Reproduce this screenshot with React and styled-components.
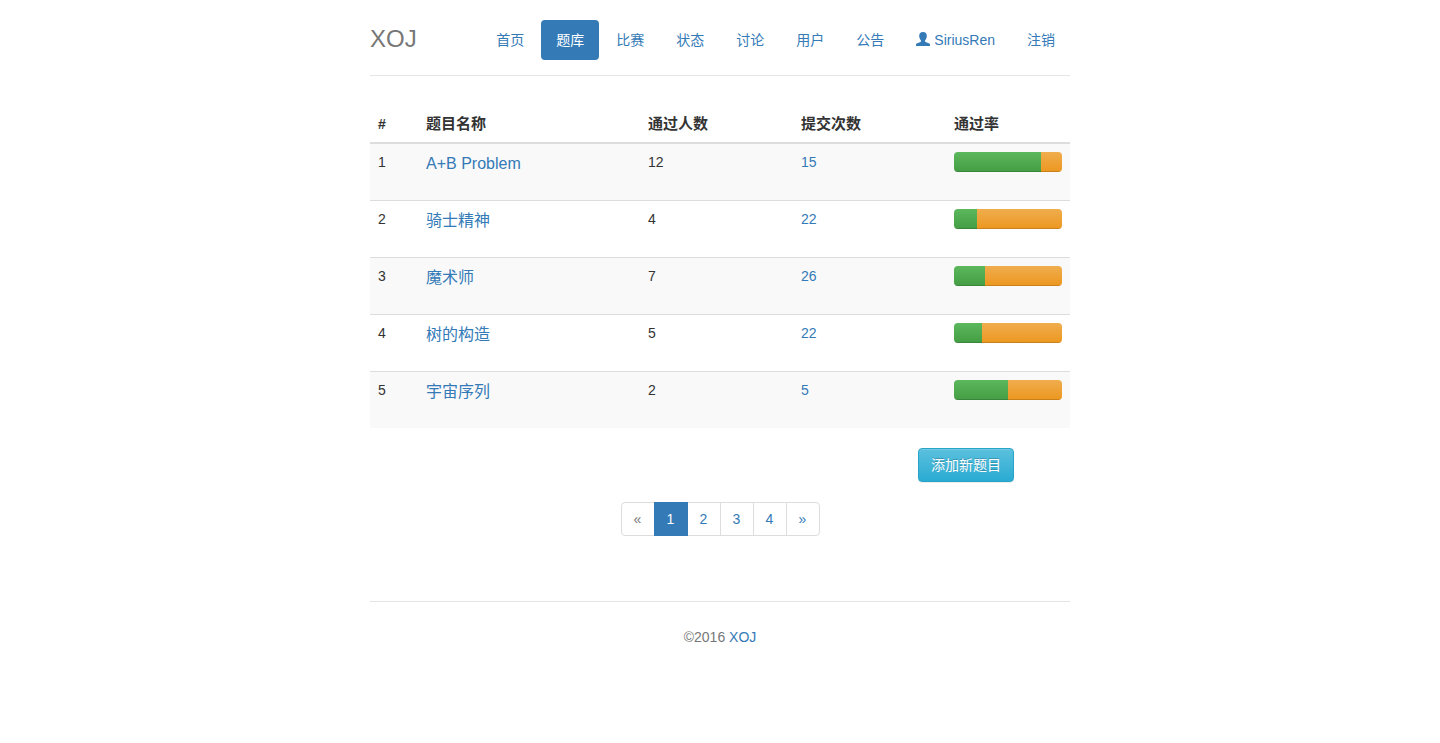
import React from 'react';
import styled, { createGlobalStyle } from 'styled-components';

const GlobalStyle = createGlobalStyle`
*{
  box-sizing:border-box;
}

body{
  margin:0;
  padding:20px 0;
  background-color:#fff;
  color:#333;
  font-family:"Liberation Sans", "Noto Sans CJK SC", sans-serif;
  font-size:14px;
  line-height:20px;
}

a{
  color:#337ab7;
  text-decoration:none;
}`

const Container = styled.div`
max-width:700px;
margin:0 auto;`

const Header = styled.header`
display:flex;
justify-content:space-between;
padding-bottom:15px;
margin-bottom:30px;
border-bottom:1px solid #e5e5e5;`

const Brand = styled.h3`
margin:0;
color:#777;
font-size:24px;
font-weight:normal;
line-height:38px;`

const Nav = styled.nav`
display:flex;
gap:2px;`

const NavLink = styled.a`
display:flex;
align-items:center;
gap:4px;
padding:10px 15px;
border-radius:4px;
color:${(props) => (props.$active ? '#fff' : '#337ab7')};
background-color:${(props) => (props.$active ? '#337ab7' : 'transparent')};`

const UserSvg = styled.svg`
width:14px;
height:14px;
margin-bottom:2px;
fill:currentColor;`

const Table = styled.table`
width:100%;
table-layout:fixed;
border-collapse:collapse;`

const Th = styled.th`
width:${(props) => props.$width};
padding:8px;
border-bottom:2px solid #ddd;
font-size:${(props) => (props.$small ? '14px' : '15px')};
text-align:left;`

const Row = styled.tr`
&:nth-child(odd){
  background-color:#f9f9f9;
}`

const Td = styled.td`
height:57px;
padding:8px;
border-top:1px solid #ddd;
vertical-align:top;`

const ProblemLink = styled.a`
font-size:16px;
line-height:24px;`

const Progress = styled.div`
display:flex;
height:20px;
overflow:hidden;
border-radius:4px;
background-color:#f5f5f5;`

const Bar = styled.div`
flex:${(props) => (props.$rest ? '1' : 'none')};
background-image:${(props) => (props.$rest
    ? 'linear-gradient(to bottom, #f0ad4e, #ec971f)'
    : 'linear-gradient(to bottom, #5cb85c, #449d44)')};
box-shadow:inset 0 -1px 0 rgba(0,0,0,0.15);`

const Actions = styled.div`
display:flex;
justify-content:flex-end;
padding:20px 8%;`

const AddBtn = styled.button`
padding:6px 12px;
border:1px solid #28a4c9;
border-radius:4px;
background-image:linear-gradient(to bottom, #5bc0de, #2aabd2);
box-shadow:inset 0 1px 0 rgba(255,255,255,0.15), 0 1px 1px rgba(0,0,0,0.075);
color:#fff;
font-family:inherit;
font-size:14px;
line-height:20px;
text-shadow:0 -1px 0 rgba(0,0,0,0.2);
cursor:pointer;`

const Pagination = styled.ul`
display:flex;
justify-content:center;
margin:0;
padding:0;
list-style:none;`

const PageItem = styled.li`
&:not(:first-child){
  margin-left:-1px;
}

&:first-child a{
  border-radius:4px 0 0 4px;
}

&:last-child a{
  border-radius:0 4px 4px 0;
}`

const PageLink = styled.a`
display:block;
position:relative;
z-index:${(props) => (props.$active ? 1 : 0)};
min-width:34px;
padding:6px 12px;
border:1px solid ${(props) => (props.$active ? '#337ab7' : '#ddd')};
background-color:${(props) => (props.$active ? '#337ab7' : '#fff')};
color:${(props) => (props.$active ? '#fff' : props.$disabled ? '#777' : '#337ab7')};
text-align:center;`

const Footer = styled.footer`
margin-top:65px;
padding-top:25px;
border-top:1px solid #e5e5e5;
color:#777;
text-align:center;`

const UserIcon = () => (
  <UserSvg viewBox="0 0 14 14" aria-hidden="true">
    <path d="M7 0C4.500 0 3.200 1.500 3.200 3.800c0 1.500.5 2.900 1.200 3.900.5.600.7.900.7 1.400 0 .5-.2.700-.7.900L1.300 11.300C.4 11.700 0 12 0 12.800V14h14v-1.200c0-.8-.4-1.100-1.300-1.500L9.600 10c-.5-.2-.7-.4-.7-.9 0-.5.2-.8.7-1.400.7-1 1.200-2.400 1.200-3.900C10.800 1.500 9.500 0 7 0z" />
  </UserSvg>
)

const links = [
  { name: '首页' },
  { name: '题库', active: true },
  { name: '比赛' },
  { name: '状态' },
  { name: '讨论' },
  { name: '用户' },
  { name: '公告' },
  { name: 'SiriusRen', icon: <UserIcon /> },
  { name: '注销' },
]

const problems = [
  { id: 1, name: 'A+B Problem', accepted: 12, submitted: 15, rate: 81 },
  { id: 2, name: '骑士精神', accepted: 4, submitted: 22, rate: 21 },
  { id: 3, name: '魔术师', accepted: 7, submitted: 26, rate: 29 },
  { id: 4, name: '树的构造', accepted: 5, submitted: 22, rate: 26 },
  { id: 5, name: '宇宙序列', accepted: 2, submitted: 5, rate: 50 },
]

const pages = ['«', '1', '2', '3', '4', '»']

export default function App() {
  return (
    <>
      <GlobalStyle />
      <Container>
        <Header>
          <Brand>XOJ</Brand>
          <Nav>
            {links.map((item) => (
              <NavLink key={item.name} href="#" $active={item.active}>
                {item.icon}
                {item.name}
              </NavLink>
            ))}
          </Nav>
        </Header>
        <main>
          <Table>
            <thead>
              <tr>
                <Th $width="48px" $small>#</Th>
                <Th>题目名称</Th>
                <Th $width="153px">通过人数</Th>
                <Th $width="153px">提交次数</Th>
                <Th $width="124px">通过率</Th>
              </tr>
            </thead>
            <tbody>
              {problems.map((item) => (
                <Row key={item.id}>
                  <Td>{item.id}</Td>
                  <Td><ProblemLink href="#">{item.name}</ProblemLink></Td>
                  <Td>{item.accepted}</Td>
                  <Td><a href="#">{item.submitted}</a></Td>
                  <Td>
                    <Progress>
                      <Bar style={{ width: `${item.rate}%` }} />
                      <Bar $rest />
                    </Progress>
                  </Td>
                </Row>
              ))}
            </tbody>
          </Table>
          <Actions>
            <AddBtn type="button">添加新题目</AddBtn>
          </Actions>
          <Pagination>
            {pages.map((page) => (
              <PageItem key={page}>
                <PageLink href="#" $active={page === '1'} $disabled={page === '«'}>{page}</PageLink>
              </PageItem>
            ))}
          </Pagination>
        </main>
        <Footer>
          ©2016 <a href="#">XOJ</a>
        </Footer>
      </Container>
    </>
  )
}
